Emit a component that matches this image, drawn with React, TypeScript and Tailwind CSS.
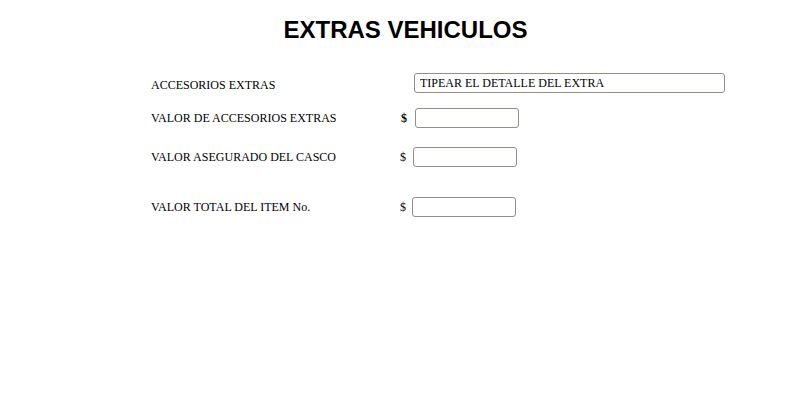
export default function App() {
  const label = "w-[249px] shrink-0 text-[12px] leading-[14px] text-black";
  const field =
    "h-[20px] w-[104px] rounded-[3px] border border-[#948d84] bg-white px-[5px] text-[12px] text-black outline-none";
  return (
    <div className="min-h-[400px] w-[800px] bg-white font-['Liberation_Serif',serif] text-black">
      <div className="flex justify-center pl-[11px] pt-[16px]">
        <h1 className="font-['Liberation_Sans',Arial,sans-serif] text-[24px] font-bold leading-[28px]">
          EXTRAS VEHICULOS
        </h1>
      </div>

      <div className="flex flex-col pl-[151px]">
        <div className="mt-[29px] flex h-[20px] items-center">
          <span className={label + " pt-[3px]"}>ACCESORIOS EXTRAS</span>
          <span className="w-[14px]" />
          <input
            className="h-[20px] w-[311px] rounded-[3px] border border-[#948d84] bg-white px-[5px] text-[12px] text-black outline-none"
            defaultValue="TIPEAR EL DETALLE DEL EXTRA"
          />
        </div>

        <div className="mt-[15px] flex h-[20px] items-center">
          <span className={label}>VALOR DE ACCESORIOS EXTRAS</span>
          <span className="w-[15px] pl-[1px] text-[12px] font-bold">$</span>
          <input className={field} />
        </div>

        <div className="mt-[19px] flex h-[20px] items-center">
          <span className={label}>VALOR ASEGURADO DEL CASCO</span>
          <span className="w-[13px] text-[12px]">$</span>
          <input className={field} />
        </div>

        <div className="mt-[30px] flex h-[20px] items-center">
          <span className={label}>VALOR TOTAL DEL ITEM No.</span>
          <span className="w-[12px] text-[12px]">$</span>
          <input className={field} />
        </div>
      </div>
    </div>
  );
}
